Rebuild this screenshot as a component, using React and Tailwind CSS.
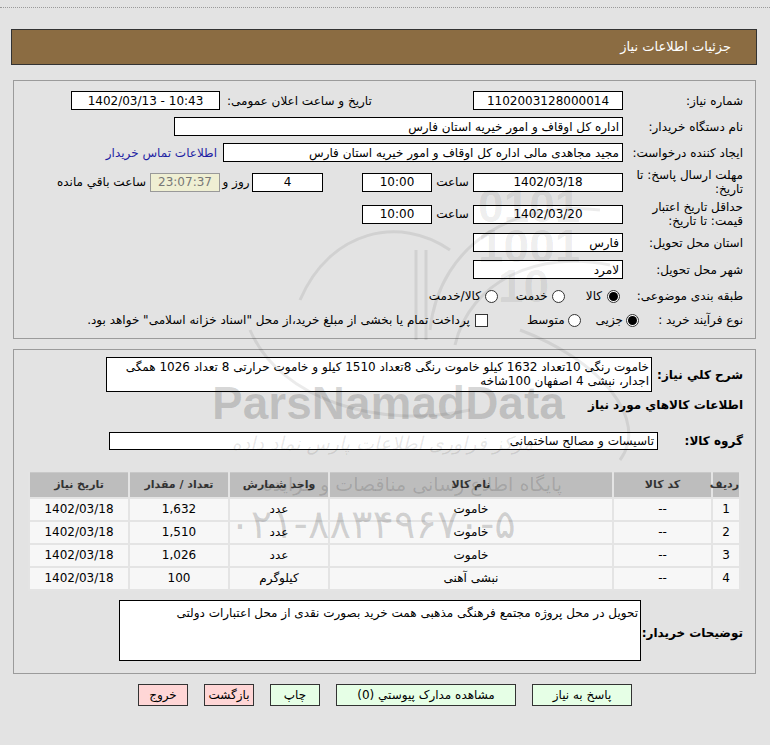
import React from "react";

const Box = ({ className = "", children }) => (
  <div className={"h-[19px] shrink-0 border border-black bg-white flex items-center " + className}>{children}</div>
);

const Radio = ({ checked }) => (
  <span className="w-[13px] h-[13px] rounded-full border border-[#333] bg-white flex items-center justify-center shrink-0">
    {checked && <span className="w-[9px] h-[9px] rounded-full bg-black" />}
  </span>
);

const rows = [
  ["1", "--", "خاموت", "عدد", "1,632", "1402/03/18"],
  ["2", "--", "خاموت", "عدد", "1,510", "1402/03/18"],
  ["3", "--", "خاموت", "عدد", "1,026", "1402/03/18"],
  ["4", "--", "نبشی آهنی", "کیلوگرم", "100", "1402/03/18"],
];

const colW = ["w-[28px]", "w-[99px]", "w-[284px]", "w-[100px]", "w-[100px]", "w-[100px]"];
const heads = ["ردیف", "کد کالا", "نام کالا", "واحد شمارش", "تعداد / مقدار", "تاریخ نیاز"];

export default function App() {
  return (
    <div dir="rtl" className="relative w-[770px] h-[745px] overflow-hidden bg-[#e3e3e3] font-['DejaVu_Sans',sans-serif] text-[12px] text-black">
      <div className="h-[8px] border-b border-dotted border-[#9a9a9a]" />
      <div className="mt-[21px] mr-[13px] ml-[11px] h-[36px] bg-[#8b6c42] border border-[#333] flex items-center pr-[25px] text-white text-[13px]">
        جزئیات اطلاعات نیاز
      </div>

      {/* Panel 1 */}
      <div className="mt-[15px] mr-[14px] ml-[13px] border border-[#9b9b9b] pr-[12px] pb-[9px]">
        <div className="mt-[10px] flex items-center h-[19px]">
          <div className="w-[120px] shrink-0">شماره نیاز:</div>
          <Box className="w-[150px] justify-center">1102003128000014</Box>
          <div className="w-[253px] shrink-0 flex justify-end pl-[7px]">تاریخ و ساعت اعلان عمومی:</div>
          <Box className="w-[149px] justify-center"><span dir="ltr">1402/03/13 - 10:43</span></Box>
        </div>
        <div className="mt-[7px] flex items-center h-[19px]">
          <div className="w-[120px] shrink-0">نام دستگاه خریدار:</div>
          <Box className="w-[449px] justify-start pr-[3px]">اداره کل اوقاف و امور خیریه استان فارس</Box>
        </div>
        <div className="mt-[7px] flex items-center h-[19px]">
          <div className="w-[120px] shrink-0">ایجاد کننده درخواست:</div>
          <Box className="w-[400px] justify-start pr-[3px]">مجید مجاهدی مالی اداره کل اوقاف و امور خیریه استان فارس</Box>
          <div className="mr-[6px] text-[#1f1fa3]">اطلاعات تماس خریدار</div>
        </div>
        <div className="mt-[6px] flex items-center h-[28px]">
          <div className="w-[120px] shrink-0 leading-[14px]">مهلت ارسال پاسخ: تا<br />تاریخ:</div>
          <Box className="w-[150px] justify-center">1402/03/18</Box>
          <div className="w-[41px] shrink-0 text-center">ساعت</div>
          <Box className="w-[70px] justify-center">10:00</Box>
          <div className="w-[39px] shrink-0" />
          <Box className="w-[71px] justify-center">4</Box>
          <div className="w-[32px] shrink-0 text-center">روز و</div>
          <Box className="w-[70px] justify-center !bg-[#efefd3] !border-[#999] text-[#777]">23:07:37</Box>
          <div className="mr-[4px]">ساعت باقي مانده</div>
        </div>
        <div className="mt-[4px] flex items-center h-[28px]">
          <div className="w-[120px] shrink-0 leading-[14px]">حداقل تاریخ اعتبار<br />قیمت: تا تاریخ:</div>
          <Box className="w-[150px] justify-center">1402/03/20</Box>
          <div className="w-[41px] shrink-0 text-center">ساعت</div>
          <Box className="w-[70px] justify-center">10:00</Box>
        </div>
        <div className="mt-[5px] flex items-center h-[19px]">
          <div className="w-[120px] shrink-0">استان محل تحویل:</div>
          <Box className="w-[150px] justify-start pr-[3px]">فارس</Box>
        </div>
        <div className="mt-[8px] flex items-center h-[19px]">
          <div className="w-[120px] shrink-0">شهر محل تحویل:</div>
          <Box className="w-[150px] justify-start pr-[3px]">لامرد</Box>
        </div>
        <div className="mt-[8px] flex items-center h-[18px]">
          <div className="w-[123px] shrink-0">طبقه بندی موضوعی:</div>
          <Radio checked />
          <span className="mr-[5px]">کالا</span>
          <span className="mr-[21px]"><Radio /></span>
          <span className="mr-[4px]">خدمت</span>
          <span className="mr-[18px]"><Radio /></span>
          <span className="mr-[4px]">کالا/خدمت</span>
        </div>
        <div className="mt-[6px] flex items-center h-[18px]">
          <div className="w-[104px] shrink-0">نوع فرآیند خرید :</div>
          <Radio checked />
          <span className="mr-[3px]">جزیی</span>
          <span className="mr-[15px]"><Radio /></span>
          <span className="mr-[3px]">متوسط</span>
          <span className="mr-[39px] w-[13px] h-[13px] border border-[#333] bg-white shrink-0" />
          <span className="mr-[5px]">پرداخت تمام یا بخشی از مبلغ خرید،از محل "اسناد خزانه اسلامی" خواهد بود.</span>
        </div>
      </div>

      {/* Panel 2 */}
      <div className="mt-[10px] mr-[14px] ml-[13px] border border-[#9b9b9b] pr-[12px] pb-[12px]">
        <div className="mt-[7px] flex items-center">
          <div className="w-[91px] shrink-0 font-bold">شرح کلي نیاز:</div>
          <div className="w-[546px] h-[35px] shrink-0 border border-black bg-white pr-[2px] pt-[2px] leading-[14px] whitespace-nowrap overflow-hidden">
            خاموت رنگی 10تعداد 1632 کیلو خاموت رنگی 8تعداد 1510 کیلو و خاموت حرارتی 8 تعداد 1026 همگی
            <br />
            اجدار، نبشی 4 اصفهان 100شاخه
          </div>
        </div>
        <div className="mt-[5px] h-[16px] flex items-center font-bold">اطلاعات کالاهاي مورد نیاز</div>
        <div className="mt-[19px] flex items-center">
          <div className="w-[85px] shrink-0 font-bold">گروه کالا:</div>
          <div className="w-[549px] h-[18px] shrink-0 border border-black bg-white flex items-center pr-[3px]">تاسیسات و مصالح ساختمانی</div>
        </div>
        <div className="mt-[22px] mr-[2px] w-[711px]">
          <table className="w-[711px] border-collapse border border-[#c9c9c9] table-fixed">
            <thead>
              <tr className="h-[25px] bg-[#bdbdbd]">
                {heads.map((h, i) => (
                  <th key={i} className={colW[i] + " border-x-2 border-[#e4e4e4] text-[11px] font-bold text-[#333] text-center p-0"}>{h}</th>
                ))}
              </tr>
            </thead>
            <tbody>
              {rows.map((r, ri) => (
                <tr key={ri} className="h-[23px] bg-[#f7f7f7]">
                  {r.map((c, ci) => (
                    <td key={ci} className="border-2 border-[#e4e4e4] text-center p-0">{c}</td>
                  ))}
                </tr>
              ))}
            </tbody>
          </table>
        </div>
        <div className="mt-[9px] flex items-center">
          <div className="w-[102px] shrink-0 font-bold pt-[5px]">توضیحات خریدار:</div>
          <div className="w-[522px] h-[61px] shrink-0 border border-black bg-white pr-[2px] pt-[3px]">
            تحویل در محل پروژه مجتمع فرهنگی مذهبی همت خرید بصورت نقدی از محل اعتبارات دولتی
          </div>
        </div>
      </div>

      <div className="mt-[10px] flex justify-center gap-[16px]">
        <div className="w-[100px] h-[22px] border border-[#333] bg-[#e6ffe6] flex items-center justify-center">پاسخ به نیاز</div>
        <div className="w-[180px] h-[22px] border border-[#333] bg-[#e6ffe6] flex items-center justify-center">مشاهده مدارک پیوستي (0)</div>
        <div className="w-[50px] h-[22px] border border-[#333] bg-[#e6ffe6] flex items-center justify-center">چاپ</div>
        <div className="w-[50px] h-[22px] border border-[#333] bg-[#ffd6d6] flex items-center justify-center">بازگشت</div>
        <div className="w-[50px] h-[22px] border border-[#333] bg-[#ffd6d6] flex items-center justify-center">خروج</div>
      </div>

      {/* watermark overlay */}
      <div className="pointer-events-none absolute inset-0">
        <svg className="absolute left-0 top-0" width="770" height="745">
          <g fill="none" stroke="rgba(0,0,0,0.08)" strokeWidth="3">
            <path d="M416 250 L416 340 M426 250 L426 340" />
            <path d="M430 330 C 440 240, 520 200, 600 210" />
            <path d="M455 345 C 470 280, 540 250, 610 265" />
            <path d="M300 300 C 330 230, 400 215, 450 250" />
            <path d="M250 330 C 280 400, 380 430, 470 410" />
            <path d="M520 330 C 600 360, 650 420, 620 460" />
          </g>
        </svg>
        <div className="absolute left-[478px] top-[186px] font-['Liberation_Sans',sans-serif] font-bold text-[46px] leading-[40px] text-[rgba(0,0,0,0.08)]" dir="ltr">
          0101<br />1001<br /><span className="ml-[20px]">10</span>
        </div>
        <div className="absolute left-[212px] top-[378px] whitespace-nowrap font-['Liberation_Sans',sans-serif] font-bold text-[46px] leading-[50px] text-[rgba(0,0,0,0.16)]" dir="ltr">
          ParsNamadData
        </div>
        <div className="absolute left-[215px] top-[430px] w-[335px] whitespace-nowrap text-center italic text-[19px] leading-[26px] text-[rgba(0,0,0,0.1)]">
          مرکز فراوری اطلاعات پارس نماد داده
        </div>
        <div className="absolute left-[300px] top-[470px] w-[262px] whitespace-nowrap text-center text-[19px] leading-[28px] text-[rgba(0,0,0,0.14)]">
          پایگاه اطلاع رسانی مناقصات و مزایده
        </div>
        <div className="absolute left-[220px] top-[500px] w-[305px] whitespace-nowrap text-center text-[40px] leading-[48px] text-[rgba(0,0,0,0.16)]" dir="ltr">
          ۰۲۱-۸۸۳۴۹۶۷۰-۵
        </div>
      </div>
    </div>
  );
}
